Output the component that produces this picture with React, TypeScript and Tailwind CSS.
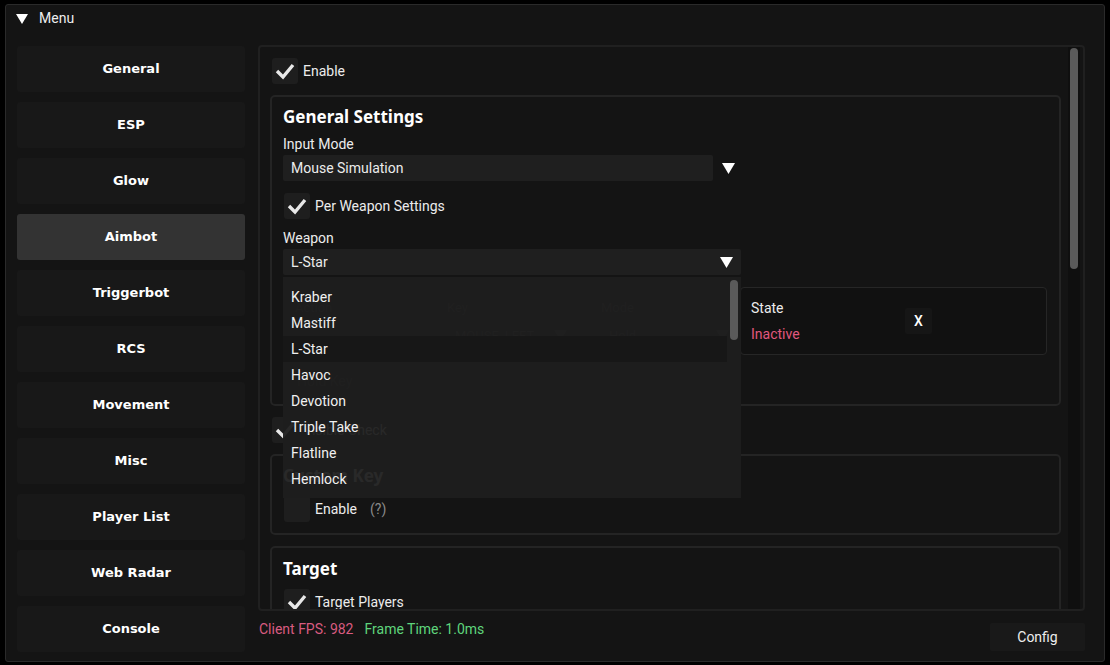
import React from "react";

const Check = () => (
  <svg width="20" height="18" viewBox="0 0 20 18">
    <polyline points="2,9 8,15 18,3" fill="none" stroke="#e8e8e8" strokeWidth="3.4" strokeLinecap="butt" strokeLinejoin="miter" />
  </svg>
);

const Tri = ({ c = "#ffffff" }: { c?: string }) => (
  <svg width="13" height="11" viewBox="0 0 13 11">
    <polygon points="0,0 13,0 6.5,11" fill={c} />
  </svg>
);

const CheckBox = ({ label, extra }: { label: string; extra?: React.ReactNode }) => (
  <div className="flex items-center h-[26px] shrink-0">
    <div className="w-[26px] h-[26px] rounded-[3px] bg-[#1e1e1e] flex items-center justify-center">
      <Check />
    </div>
    <span className="ml-[5px] text-[14px] text-[#ececec]">{label}</span>
    {extra}
  </div>
);

const Group = ({ children, className = "" }: { children: React.ReactNode; className?: string }) => (
  <div className={"shrink-0 rounded-[5px] border-2 border-[#242424] px-[11px] " + className}>{children}</div>
);

const titleFont = { fontFamily: "'Noto Sans', Roboto, sans-serif" };

const side = ["General", "ESP", "Glow", "Aimbot", "Triggerbot", "RCS", "Movement", "Misc", "Player List", "Web Radar", "Console"];
const weapons = ["Kraber", "Mastiff", "L-Star", "Havoc", "Devotion", "Triple Take", "Flatline", "Hemlock"];

export default function App() {
  return (
    <div className="w-[1110px] h-[665px] bg-black pt-[4px] pl-[5px]" style={{ fontFamily: "Roboto, 'Noto Sans', sans-serif" }}>
      <div className="w-[1100px] h-[658px] bg-[#141414] border border-[#2a2a2a] rounded-[3px] flex flex-col">
        <div className="h-[27px] flex items-center pl-[10px] text-[14px] text-[#eeeeee] shrink-0">
          <svg width="12" height="10" viewBox="0 0 12 10"><polygon points="0,0 12,0 6,10" fill="#ffffff" /></svg>
          <span className="ml-[11px]">Menu</span>
        </div>
        <div className="flex flex-1 pl-[11px] pt-[13px]">
          <div className="w-[228px] flex flex-col gap-[10px] pt-[1px]">
            {side.map((s) => (
              <div
                key={s}
                className={
                  "h-[46px] shrink-0 rounded-[3px] flex items-center justify-center text-[13px] font-bold text-white " +
                  (s === "Aimbot" ? "bg-[#333333]" : "bg-[#181818]")
                }
                style={{ fontFamily: "'DejaVu Sans', Verdana, sans-serif" }}
              >
                {s}
              </div>
            ))}
          </div>
          <div className="ml-[13px] w-[827px] flex flex-col relative">
            <div className="h-[566px] shrink-0 rounded-[4px] border-2 border-[#202020] flex overflow-hidden">
              <div className="flex-1 pl-[10px] pr-[7px] pt-[11px] flex flex-col overflow-hidden">
                <div className="ml-[2px]"><CheckBox label="Enable" /></div>
                <Group className="mt-[11px] h-[311px] pt-[9px]">
                  <div className="text-[17px] font-bold text-white h-[22px] leading-[22px]" style={titleFont}>General Settings</div>
                  <div className="mt-[8px] text-[14px] text-[#ececec] h-[16px] leading-[16px]">Input Mode</div>
                  <div className="mt-[3px] flex items-center">
                    <div className="w-[430px] h-[26px] bg-[#1f1f1f] rounded-[2px] flex items-center pl-[8px] text-[14px] text-[#ececec]">Mouse Simulation</div>
                    <div className="ml-[9px]"><Tri /></div>
                  </div>
                  <div className="mt-[12px] pl-[1px]"><CheckBox label="Per Weapon Settings" /></div>
                  <div className="mt-[11px] text-[14px] text-[#ececec] h-[16px] leading-[16px]">Weapon</div>
                  <div className="mt-[3px] w-[458px] h-[26px] bg-[#1f1f1f] rounded-[2px] flex items-center justify-between pl-[8px] pr-[8px] text-[14px] text-[#ececec]">
                    <span>L-Star</span>
                    <Tri />
                  </div>
                  <div className="mt-[12px] flex">
                    <div className="w-[452px] h-[68px] relative text-[13px] text-[#4a4a4a]">
                      <div className="flex pt-[11px]">
                        <span className="w-[160px] pl-[12px]">Action</span>
                        <span className="w-[152px] pl-[4px]">Key</span>
                        <span className="pl-[6px]">Mode</span>
                      </div>
                      <div className="flex mt-[8px] items-center">
                        <span className="w-[160px] pl-[12px]"></span>
                        <span className="w-[152px] pl-[12px] flex items-center gap-[20px]">MOUSE_LEFT <Tri c="#444444" /></span>
                        <span className="flex-1 pl-[14px] pr-[6px] flex items-center justify-between">Hold <Tri c="#444444" /></span>
                      </div>
                    </div>
                    <div className="ml-[5px] w-[307px] h-[68px] rounded-[4px] border border-[#262626] bg-[#111111] flex items-center pl-[10px]">
                      <div className="flex flex-col w-[154px]">
                        <span className="text-[14px] text-[#ececec] leading-[18px]">State</span>
                        <span className="text-[14px] text-[#e0587f] leading-[18px] mt-[8px]">Inactive</span>
                      </div>
                      <div className="w-[27px] h-[26px] bg-[#161616] rounded-[2px] flex items-center justify-center text-[14px] text-white font-medium">X</div>
                    </div>
                  </div>
                  <div className="mt-[16px] pl-[14px] text-[14px] text-[#444444]">Hold Key</div>
                </Group>
                <div className="mt-[11px] ml-[2px] flex items-center h-[26px] shrink-0">
                  <div className="w-[26px] h-[26px] rounded-[3px] bg-[#1e1e1e] flex items-center justify-center"><Check /></div>
                  <span className="ml-[5px] text-[14px] text-[#ececec]">Visible Check</span>
                </div>
                <Group className="mt-[11px] h-[81px] pt-[9px]">
                  <div className="text-[17px] font-bold text-white h-[22px] leading-[22px]" style={titleFont}>Custom Key</div>
                  <div className="mt-[9px] flex items-center h-[26px] pl-[1px]">
                    <div className="w-[26px] h-[26px] rounded-[3px] bg-[#1e1e1e]" />
                    <span className="ml-[5px] text-[14px] text-[#ececec]">Enable</span>
                    <span className="ml-[13px] text-[14px] text-[#8a8a8a]">(?)</span>
                  </div>
                </Group>
                <Group className="mt-[11px] h-[120px] pt-[10px]">
                  <div className="text-[17px] font-bold text-white h-[22px] leading-[22px]" style={titleFont}>Target</div>
                  <div className="mt-[9px] pl-[1px]"><CheckBox label="Target Players" /></div>
                </Group>
              </div>
              <div className="w-[12px] mr-[3px] pt-[1px] pb-[1px] bg-[#0f0f0f] flex flex-col items-center">
                <div className="w-[8px] h-[221px] rounded-full bg-[#5a5a5a]" />
              </div>
            </div>
            <div className="flex items-start justify-between h-[46px]">
              <div className="flex text-[14px] ml-[1px] mt-[8px]">
                <span className="text-[#d95b80]">Client FPS: 982</span>
                <span className="ml-[11px] text-[#5fd47c]">Frame Time: 1.0ms</span>
              </div>
              <div className="w-[95px] h-[28px] mt-[12px] bg-[#191919] rounded-[2px] flex items-center justify-center text-[14px] text-[#eeeeee]">Config</div>
            </div>
            <div className="absolute left-[25px] top-[232px] w-[458px] h-[221px] bg-[#1e1e1e]/95 flex">
              <div className="flex-1 pt-[7px]">
                {weapons.map((w) => (
                  <div key={w} className={"h-[26px] flex items-center pl-[8px] text-[14px] text-[#f0f0f0] " + (w === "L-Star" ? "bg-[#171717]" : "")}>
                    {w}
                  </div>
                ))}
              </div>
              <div className="w-[14px] flex flex-col items-center pt-[3px]">
                <div className="w-[8px] h-[60px] rounded-full bg-[#5a5a5a]" />
              </div>
            </div>
          </div>
        </div>
      </div>
    </div>
  );
}
